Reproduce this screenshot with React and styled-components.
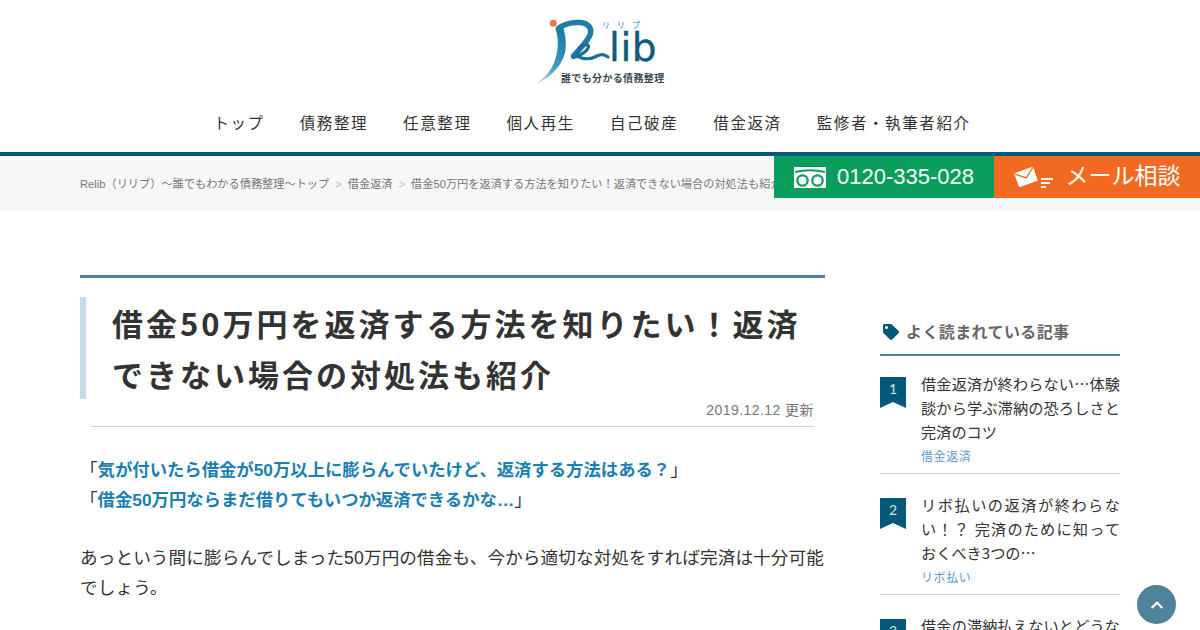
import React from 'react';
import styled, { createGlobalStyle } from 'styled-components';
import { FaTag, FaChevronUp } from 'react-icons/fa';

const GlobalStyle = createGlobalStyle`
  html, body {
    margin: 0;
    padding: 0;
    height: 630px;
    overflow: hidden;
    background: #fff;
    font-family: "Liberation Sans", "Noto Sans CJK JP", sans-serif;
    color: #333;
  }
  * { box-sizing: border-box; }
`;

const Header = styled.header`
  height: 156px;
  border-bottom: 4px solid #04587a;
  display: flex;
  flex-direction: column;
  align-items: center;
`;

const LogoWrap = styled.a`
  display: block;
  position: relative;
  width: 132px;
  height: 68px;
  margin-top: 18px;
`;

const LogoLib = styled.span`
  position: absolute;
  left: 75px;
  top: 15px;
  font: 400 39px/30px "DejaVu Sans", "Liberation Sans", sans-serif;
  letter-spacing: 0.6px;
  -webkit-text-stroke: 0.4px #0b5c7e;
  color: #0b5c7e;
`;

const LogoKana = styled.span`
  position: absolute;
  left: 68px;
  top: 3px;
  font-size: 8px;
  line-height: 10px;
  letter-spacing: 7px;
  color: #2b8fb8;
  white-space: nowrap;
`;

const LogoTagline = styled.span`
  position: absolute;
  left: 27px;
  top: 53px;
  font: 700 10px/14px "Noto Sans CJK JP", sans-serif;
  letter-spacing: 0.35px;
  color: #3b4a52;
  white-space: nowrap;
`;

const Nav = styled.nav`
  display: flex;
  gap: 35px;
  margin: 28px 16px 0 0;
  font-size: 15.5px;
  line-height: 20px;
  letter-spacing: 1.6px;
  color: #333;
`;

const NavItem = styled.a`
  white-space: nowrap;
`;

const CrumbBar = styled.div`
  position: relative;
  height: 55px;
  background: #f7f7f7;
  padding: 20px 0 0 80px;
  overflow: hidden;
`;

const Crumbs = styled.div`
  display: flex;
  font-size: 11.2px;
  line-height: 16px;
  color: #777;
  white-space: nowrap;
`;

const CrumbSep = styled.span`
  margin: 0 6px;
  color: #bbb;
`;

const CtaGroup = styled.div`
  position: fixed;
  top: 156px;
  right: 0;
  height: 42px;
  display: flex;
`;

const CtaButton = styled.a`
  width: ${(p) => p.$width}px;
  background: ${(p) => p.$bg};
  color: #fff;
  display: flex;
  align-items: center;
  justify-content: center;
  gap: ${(p) => p.$gap}px;
  font-size: ${(p) => p.$size}px;
  white-space: nowrap;
`;

const CtaLabel = styled.span`
  line-height: 28px;
  margin-top: ${(p) => p.$lift}px;
`;

const Layout = styled.div`
  display: flex;
  justify-content: space-between;
  padding: 64px 80px 0;
`;

const Main = styled.main`
  width: 745px;
  border-top: 3px solid #4f829b;
  padding-top: 19px;
`;

const Title = styled.h1`
  margin: 0;
  padding: 0 0 0 26px;
  border-left: 6px solid #c5dde8;
  font: 700 31px/51px "Noto Sans CJK JP", sans-serif;
  letter-spacing: 3px;
  color: #333;
`;

const Updated = styled.div`
  margin: 0 11px;
  padding: 2px 0 6px;
  border-bottom: 1px solid #c5d8e2;
  text-align: right;
  font-size: 14px;
  line-height: 19px;
  letter-spacing: 0.45px;
  color: #777;
`;

const Lead = styled.p`
  margin: 28px 0 0;
  font-size: 17.6px;
  line-height: 30px;
  color: #333;
`;

const Strong = styled.strong`
  color: #1a80b2;
  font-size: 17.35px;
`;

const Body = styled.p`
  margin: 28px 0 0;
  font-size: 17.6px;
  line-height: 30px;
  letter-spacing: 0.12px;
  color: #333;
`;

const Side = styled.aside`
  width: 240px;
  padding-top: 43px;
`;

const SideTitle = styled.h2`
  margin: 0;
  height: 38px;
  padding: 0 0 0 3px;
  border-bottom: 2px solid #4f829b;
  display: flex;
  align-items: flex-start;
  gap: 7px;
  font: 700 16px/27px "Noto Sans CJK JP", sans-serif;
  letter-spacing: 0.4px;
  color: #666;
  svg { margin-top: 6px; color: #04587a; }
`;

const RankItem = styled.article`
  display: flex;
  gap: 15px;
  padding: 18px 0 7px;
  border-bottom: 1px solid #ccc;
  &:first-of-type { padding-top: 15px; }
`;

const Ribbon = styled.div`
  flex: none;
  width: 26px;
  height: 31px;
  margin-top: 6px;
  padding-top: 3px;
  background: #04587a;
  clip-path: polygon(0 0, 100% 0, 100% 100%, 50% 81%, 0 100%);
  color: #cfe6d8;
  font: 14px/18px Lato, sans-serif;
  text-align: center;
`;

const RankBody = styled.div`
  min-width: 0;
  flex: 1;
`;

const RankTitle = styled.a`
  display: block;
  font-family: "Noto Sans CJK JP", sans-serif;
  font-size: 15.2px;
  line-height: 24px;
  text-align: justify;
  color: #333;
`;

const RankCat = styled.a`
  display: block;
  margin-top: 5px;
  font-size: 12px;
  line-height: 18px;
  letter-spacing: 0.6px;
  color: #5b9bd0;
`;

const ToTop = styled.a`
  position: fixed;
  left: 1137px;
  top: 585px;
  width: 39px;
  height: 39px;
  border-radius: 50%;
  background: #4f829b;
  color: #fff;
  display: flex;
  align-items: center;
  justify-content: center;
`;

const NAV_ITEMS = ['トップ', '債務整理', '任意整理', '個人再生', '自己破産', '借金返済', '監修者・執筆者紹介'];

const RANKING = [
  { title: '借金返済が終わらない…体験談から学ぶ滞納の恐ろしさと完済のコツ', cat: '借金返済' },
  { title: 'リボ払いの返済が終わらない！？ 完済のために知っておくべき3つの…', cat: 'リボ払い' },
  { title: '借金の滞納払えないとどうなる？放置するリスクと対処法', cat: '借金返済' },
];

function Logo() {
  return (
    <LogoWrap>
      <svg width="132" height="68" viewBox="0 0 132 68">
        <defs>
          <linearGradient id="swoosh" x1="0" y1="1" x2="0.6" y2="0">
            <stop offset="0" stopColor="#b5dbe8" />
            <stop offset="0.5" stopColor="#3f9dc2" />
            <stop offset="1" stopColor="#1d7ea8" />
          </linearGradient>
        </defs>
        <circle cx="19.3" cy="5.3" r="3.5" fill="#f0764a" />
        <path
          d="M2.5 65.5 C14 58 21 47 23 34 C24.5 26 24 18 21.5 11 L29 9 C32 18 32.5 27 31 35 C27 50 15 60 2.5 65.5 Z"
          fill="url(#swoosh)"
        />
        <path
          d="M24.5 10.5 C30 6 38 4 46 4.5 C54 5 58 10 56.5 15.5 C54 24 45 31 39.5 38"
          fill="none"
          stroke="#1d7ea8"
          strokeWidth="5.5"
          strokeLinecap="round"
        />
        <path
          d="M39 39.5 C46 38.5 55 32 54.5 28 C53.5 24.5 44 27.5 43.5 35 C43.5 42 56 42 63 38 C67 36 71 36.5 74 39"
          fill="none"
          stroke="#1a7096"
          strokeWidth="3.2"
          strokeLinecap="round"
        />
      </svg>
      <LogoKana>リリプ</LogoKana>
      <LogoLib>lib</LogoLib>
      <LogoTagline>誰でも分かる債務整理</LogoTagline>
    </LogoWrap>
  );
}

function FreeDialIcon() {
  return (
    <svg width="32" height="21" viewBox="0 0 32 21">
      <rect width="32" height="21" fill="#fff" />
      <path d="M1 5 C10 3 22 3 31 5" fill="none" stroke="#0a9e5c" strokeWidth="2" />
      <circle cx="8.5" cy="13.5" r="5.2" fill="none" stroke="#0a9e5c" strokeWidth="2.2" />
      <circle cx="23.5" cy="13.5" r="5.2" fill="none" stroke="#0a9e5c" strokeWidth="2.2" />
    </svg>
  );
}

function MailIcon() {
  return (
    <svg width="39" height="23" viewBox="0 0 39 23">
      <g transform="rotate(-20 12 11)">
        <rect x="2" y="3.5" width="20" height="15" rx="1.2" fill="#fff" />
        <path d="M2.5 4.5 L12 12 L21.5 4.5" fill="none" stroke="#f26a21" strokeWidth="1.2" />
      </g>
      <path d="M27 13 H39 M27 17 H36 M27 21 H32" stroke="#fff" strokeWidth="1.8" />
    </svg>
  );
}

export default function App() {
  return (
    <>
      <GlobalStyle />
      <Header>
        <Logo />
        <Nav>
          {NAV_ITEMS.map((item) => (
            <NavItem key={item}>{item}</NavItem>
          ))}
        </Nav>
      </Header>
      <CrumbBar>
        <Crumbs>
          <span>Relib（リリブ）～誰でもわかる債務整理～トップ</span>
          <CrumbSep>&gt;</CrumbSep>
          <span>借金返済</span>
          <CrumbSep>&gt;</CrumbSep>
          <span>借金50万円を返済する方法を知りたい！返済できない場合の対処法も紹介</span>
        </Crumbs>
      </CrumbBar>
      <CtaGroup>
        <CtaButton $bg="#0a9e5c" $width={220} $gap={11} $size={22}>
          <FreeDialIcon />
          <CtaLabel $lift={0}>0120-335-028</CtaLabel>
        </CtaButton>
        <CtaButton $bg="#f26a21" $width={206} $gap={13} $size={23}>
          <MailIcon />
          <CtaLabel $lift={-3}>メール相談</CtaLabel>
        </CtaButton>
      </CtaGroup>
      <Layout>
        <Main>
          <Title>借金50万円を返済する方法を知りたい！返済できない場合の対処法も紹介</Title>
          <Updated>2019.12.12 更新</Updated>
          <Lead>
            「<Strong>気が付いたら借金が50万以上に膨らんでいたけど、返済する方法はある？</Strong>」
            <br />
            「<Strong>借金50万円ならまだ借りてもいつか返済できるかな…</Strong>」
          </Lead>
          <Body>あっという間に膨らんでしまった50万円の借金も、今から適切な対処をすれば完済は十分可能でしょう。</Body>
        </Main>
        <Side>
          <SideTitle>
            <FaTag size={16} />
            よく読まれている記事
          </SideTitle>
          {RANKING.map((r, i) => (
            <RankItem key={r.title}>
              <Ribbon>{i + 1}</Ribbon>
              <RankBody>
                <RankTitle>{r.title}</RankTitle>
                <RankCat>{r.cat}</RankCat>
              </RankBody>
            </RankItem>
          ))}
        </Side>
      </Layout>
      <ToTop>
        <FaChevronUp size={14} />
      </ToTop>
    </>
  );
}
